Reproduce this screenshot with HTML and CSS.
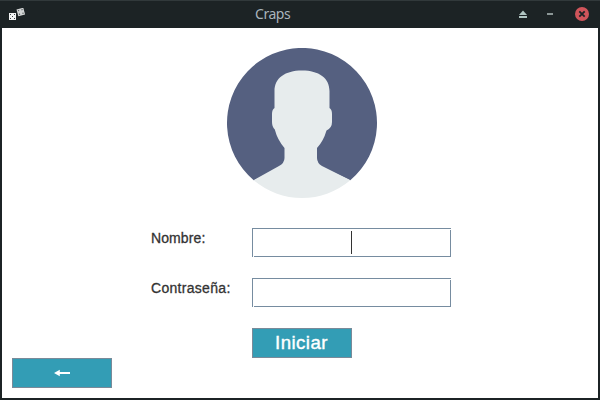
FILE: index.html
```html
<!DOCTYPE html>
<html lang="es">
<head>
<meta charset="utf-8">
<title>Craps</title>
<link rel="stylesheet" href="styles.css">
</head>
<body>
<div class="window">
  <header class="titlebar">
    <svg class="dice" width="18" height="16" viewBox="0 0 18 16">
      <rect x="1" y="5" width="7" height="7" fill="#f0f2f2"/>
      <g fill="#3c4345"><rect x="2" y="6" width="1" height="1"/><rect x="6" y="6" width="1" height="1"/><rect x="4" y="8" width="1" height="1"/><rect x="2" y="10" width="1" height="1"/><rect x="6" y="10" width="1" height="1"/></g>
      <g transform="rotate(-15 12.8 4)"><rect x="9.3" y=".5" width="7" height="7" fill="#d2d5d5"/><g fill="#5a6062"><rect x="10.4" y="1.5" width="1.2" height="1.2"/><rect x="14" y="1.5" width="1.2" height="1.2"/><rect x="10.4" y="5.2" width="1.2" height="1.2"/><rect x="14" y="5.2" width="1.2" height="1.2"/></g></g>
    </svg>
    <span class="title">Craps</span>
    <svg class="controls" width="72" height="16" viewBox="0 0 72 16">
      <path d="M5 4.600 9 9H1z" fill="#b0c5c2"/>
      <rect x="1" y="10" width="8" height="2" fill="#b0c5c2"/>
      <rect x="29" y="7" width="6" height="2" fill="#8b9696"/>
      <circle cx="64" cy="8" r="7" fill="#d0555b"/>
      <path d="m61.300 5.300 5.400 5.400m0-5.400-5.400 5.400" stroke="#1c2325" stroke-width="1.800"/>
    </svg>
  </header>
  <main class="content">
    <svg class="avatar" width="150" height="150" viewBox="0 0 150 150">
      <path d="M26.700 132.300A75 75 0 1 1 123.300 132.300L75 110Z" fill="#556080"/>
      <path d="M47.500 43C47.500 30 58 22.500 75 22.500S102.500 30 102.500 43V60Q105 61.500 105 66V74Q105 80 99.500 82.500Q96.500 93 90 100V110Q90 115 95 118L120 130.500L123.300 132.300A75 75 0 0 1 26.700 132.300L30 130.200L52 118Q57.500 115 57.500 110V100Q50.500 92 47.800 81.500Q45 79 45 74V66Q45 61.500 47.500 60Z" fill="#e7eced"/>
    </svg>
    <form class="form">
      <label class="label name">Nombre:</label>
      <div class="field"><span class="caret"></span></div>
      <label class="label">Contraseña:</label>
      <div class="field"></div>
      <button class="button login" type="button">Iniciar</button>
    </form>
    <button class="button back" type="button" aria-label="Volver">
      <svg width="16" height="8" viewBox="0 0 16 8"><path d="M0 4 5.800 .700V3H16V5H5.800V7.300Z" fill="#fff"/></svg>
    </button>
  </main>
</div>
</body>
</html>
```
FILE: styles.css
```css
* { box-sizing: border-box; }
body { margin: 0; background: #1c2325; }
.window {
  width: 600px;
  height: 400px;
  display: flex;
  flex-direction: column;
  background: #1c2325;
  padding: 0 2px 2px;
}
.titlebar {
  height: 28px;
  flex: none;
  margin: 0 -2px;
  padding: 0 10px 0 8px;
  display: grid;
  grid-template-columns: 1fr auto 1fr;
  align-items: center;
  border-top: 1px solid #31393b;
}
.dice { display: block; margin-top: 3px; }
.title {
  font: 14px/20px "Noto Sans", sans-serif;
  letter-spacing: -.45px;
  color: #a9b4bc;
  width: 36px;
  margin: -1px 52px 0 0;
}
.controls { display: block; justify-self: end; margin-bottom: 1px; }
.content {
  flex: 1;
  background: #fff;
  display: flex;
  flex-direction: column;
  padding: 20px 10px 10px;
}
.avatar { display: block; align-self: center; margin-left: 4px; }
.form {
  display: grid;
  grid-template-columns: 101px 199px;
  row-gap: 21px;
  margin: 30px 0 0 139px;
}
.label {
  font: 14px/20px "Liberation Sans", Arial, sans-serif;
  color: #333;
  -webkit-text-stroke: .3px #333;
  letter-spacing: .3px;
  white-space: nowrap;
}
.name { letter-spacing: .1px; }
.field {
  --line: linear-gradient(#768ca0, #768ca0);
  height: 29px;
  display: flex;
  justify-content: center;
  padding-top: 3px;
  background:
    var(--line) 0 0 / 199px 1px no-repeat,
    var(--line) 0 0 / 1px 29px no-repeat,
    var(--line) 2px 28px / 197px 1px no-repeat,
    var(--line) 198px 2px / 1px 27px no-repeat;
}
.caret { width: 1px; height: 23px; background: #333; }
.button {
  width: 100px;
  height: 30px;
  padding: 0;
  border: 1px solid #7a8a99;
  border-radius: 0;
  background: #339db5;
  color: #fff;
}
.login {
  grid-column: 2;
  font: 18.67px/28px "Liberation Sans", Arial, sans-serif;
  -webkit-text-stroke: .4px #fff;
  letter-spacing: .45px;
  padding-right: 1px;
}
.back {
  margin-top: auto;
  display: flex;
  align-items: center;
  justify-content: center;
}
.back svg { display: block; }
```
